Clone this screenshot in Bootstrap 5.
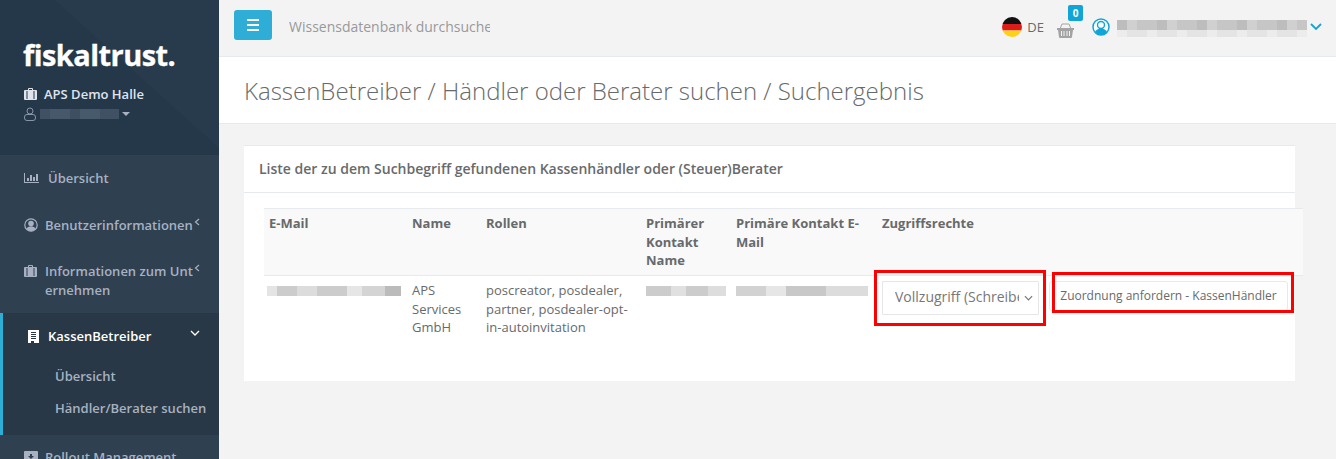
<!DOCTYPE html>
<html lang="de">
<head>
<meta charset="utf-8">
<title>Suchergebnis</title>
<link href="https://cdn.jsdelivr.net/npm/bootstrap@5.3.0/dist/css/bootstrap.min.css" rel="stylesheet">
<style>
html,body{height:459px;overflow:hidden}
body{font-family:"Open Sans",sans-serif;font-size:13px;color:#676a6c;background:#f3f3f4}
.shell{height:459px}
.side{width:219px;flex:none;background:#2f4050;overflow:hidden}
.side-head{height:155px;background:linear-gradient(42deg,#25384a 0 58%,#283b4c 58.2% 100%);padding:38px 0 0 23px;color:#dfe4ed}
.logo{font-family:"Open Sans",sans-serif;font-weight:700;font-size:29px;line-height:33px;color:#fff;letter-spacing:-.55px;-webkit-text-stroke:.3px #fff}
.org{font-weight:600;line-height:18px;margin:14px 0 0 1px;color:#dfe4ed;gap:7px}
.usr{height:18px;gap:4px;margin:2px 0 0 1px}
.caret-d{width:0;height:0;border:4px solid transparent;border-top-color:#a7b1c2;border-bottom:0;margin-left:-1px}
.blur-u{width:79px;height:10px;background:linear-gradient(90deg,#3f5163 0 10px,#47586a 10px 30px,#3d4f60 30px 40px,#475a6c 40px 60px,#3f5163 60px)}
.mnav a{display:flex;color:#a7b1c2;font-weight:600;text-decoration:none;position:relative}
.mnav svg{flex:none}
.it1{height:47px;padding:14px 24px;line-height:18px;gap:9px}
.it2{height:46px;padding:14px 0 0 24px;line-height:18px;gap:5px}
.it3{height:65px;padding:14px 0 0 24px;line-height:19px;gap:5px}
.it-t{width:148px;word-break:break-all}
.chev{position:absolute;left:194px;top:16px}
.active-wrap{background:#293846;border-left:3px solid #2eaed6;height:122px}
.active-wrap .it4{color:#fff;padding:14px 0 0 25px;height:47px;line-height:18px;gap:9px}
.subnav a{padding:0 0 0 52px;height:32px;line-height:32px;font-weight:600}
.it5{padding:13px 0 0 24px;gap:7px;line-height:18px}
.main{flex:1;min-width:0;background:#f3f3f4}
.topb{height:57px;border-bottom:1px solid #e7eaec;padding:0 0 0 15px}
.menu-b{width:38px;height:30px;background:#2eaed6;border-radius:3px;padding:0;border:0;margin-top:10px;display:flex;flex-direction:column;gap:3px;align-items:center;justify-content:center}
.menu-b span{display:block;width:12px;height:2px;background:#fff}
.srch{margin:0 0 0 17px;width:201px;height:56px;border:0;background:transparent;font-size:14px;color:#999;overflow:hidden;white-space:nowrap;line-height:54px}
.tr-r{margin-left:auto;height:56px;padding:0 14px 2px 0}
.lang{font-size:13px;margin:0 0 0 5px;line-height:15px;color:#676a6c}
.basket-w{position:relative;margin:0 0 0 13px;width:17px;height:15px}
.cnt{position:absolute;left:11px;top:-15px;width:15px;height:16px;background:#10a5d6;color:#fff;font-size:10px;font-weight:700;line-height:16px;text-align:center;border-radius:2px}
.ava{margin-left:18px}
.blur-top{margin-left:7px;width:190px;padding-top:2px}
.blur-top i{display:block;height:10px;background:repeating-linear-gradient(90deg,#bdbdbd 0 10px,#d0d0d0 10px 20px,#c6c6c6 20px 40px)}
.blur-top i+i{height:7px;background:repeating-linear-gradient(90deg,#ececec 0 10px,#e4e4e4 10px 30px)}
.t-chev{margin-left:3px}
.pagehead{height:67px;background:#fff;border-bottom:1px solid #e7eaec;padding:0 0 0 25px}
.pagehead h2{font-family:"Open Sans",sans-serif;font-size:24px;font-weight:300;line-height:67px;margin:0;color:#676a6c}
.wrapc{padding:21px 41px 0 25px}
.box{background:#fff;border:0;border-top:1px solid #e7eaec;border-radius:0;height:236px}
.box-t{height:47px;border-bottom:1px solid #e7eaec;padding:14px 15px 0;font-size:14px;line-height:17px;font-weight:600;color:#676a6c;margin:0}
.tblw{padding:15px 0 0 20px;width:1059px}
.ttbl{table-layout:fixed;width:1039px;margin:0;font-size:13px;color:#676a6c;--bs-table-color:#676a6c;--bs-table-bg:transparent}
.ttbl th{background:#f9f9f9;font-weight:700;border-top:1px solid #e7eaec;border-bottom:1px solid #e7eaec;padding:5px 5px;line-height:18.5px;height:67px;vertical-align:top}
.ttbl td{border:0;padding:5px;line-height:18.5px;vertical-align:top}
.blurc{display:block;height:10px;margin-top:5px}
.b1{width:134px;margin-left:-2px;background:linear-gradient(90deg,#e4e4e4 0 10px,#ccc 10px 30px,#dcdcdc 30px 50px,#ccc 50px 80px,#e6e6e6 80px 95px,#d4d4d4 95px 118px,#bbb 118px)}
.b2{width:80px;background:linear-gradient(90deg,#ccc 0 25px,#e0e0e0 25px 40px,#ccc 40px 62px,#ddd 62px)}
.b3{width:132px;background:linear-gradient(90deg,#d2d2d2 0 30px,#e6e6e6 30px 50px,#c8c8c8 50px 90px,#dcdcdc 90px)}
.sel-i{width:157px;height:34px;padding:0 19px 2px 12px;font-size:14px;color:#777;background-image:url("data:image/svg+xml,%3csvg xmlns='http://www.w3.org/2000/svg' viewBox='0 0 10 6'%3e%3cpath fill='none' stroke='%23777' stroke-width='1.300' d='M1 1l4 4 4-4'/%3e%3c/svg%3e");background-position:right 5px center;background-size:9px 6px;border:1px solid #e5e6e7;border-radius:1px;line-height:30px}
.red{position:absolute;border:3px solid red;pointer-events:none}
.r1{left:874px;top:270px;width:172px;height:56px}
.r2{left:1052px;top:272px;width:242px;height:41px}
.req{font-size:12px;color:#676a6c;background:#fff;border:1px solid #e7eaec;border-radius:3px;height:30px;width:239px;padding:0;white-space:nowrap;margin:0 0 0 -5px;line-height:28px}
</style>
</head>
<body>
<div class="shell d-flex">
<nav class="side">
  <div class="side-head">
    <div class="logo">fiskaltrust.</div>
    <div class="org d-flex align-items-center">
      <svg width="13" height="12" viewBox="0 0 13 12"><path fill="#dfe4ed" d="M4 2V1q0-1 1-1h3q1 0 1 1v1h3q1 0 1 1v8q0 1-1 1H1q-1 0-1-1V3q0-1 1-1zM5 1v1h3V1zM2.500 3v8h1V3zM9.500 3v8h1V3z" fill-rule="evenodd"/></svg>
      <span>APS Demo Halle</span>
    </div>
    <div class="usr d-flex align-items-center">
      <svg width="12" height="14" viewBox="0 0 12 14" fill="none" stroke="#8796a8"><circle cx="6" cy="4" r="3"/><rect x=".5" y="7.500" width="11" height="6" rx="2.500"/></svg>
      <span class="blur-u"></span><span class="caret-d"></span>
    </div>
  </div>
  <div class="mnav">
    <a class="it1" href="#">
      <svg width="15" height="18" viewBox="0 0 15 18"><path fill="#a7b1c2" d="M0 4h1v9h14v1H0zM3 9h2v3H3zM6 6h2v6H6zM9 8h2v4H9zM12 5h2v7h-2z"/></svg>
      <span>Übersicht</span>
    </a>
    <a class="it2" href="#">
      <svg width="16" height="18" viewBox="0 0 16 18"><circle cx="7" cy="9" r="6.200" fill="none" stroke="#a7b1c2" stroke-width="1.200"/><circle cx="7" cy="7.500" r="2.800" fill="#a7b1c2"/><path fill="#a7b1c2" d="M2.500 13q1-2.800 4.500-2.800t4.500 2.800q-2 2.300-4.500 2.300t-4.500-2.300z"/></svg>
      <span class="it-t">Benutzerinformationen</span>
      <svg class="chev" width="6" height="8" viewBox="0 0 6 8" fill="none" stroke="#a7b1c2" stroke-width="1.200"><path d="M5 1 1.500 4 5 7"/></svg>
    </a>
    <a class="it3" href="#">
      <svg width="16" height="18" viewBox="0 0 16 18"><path fill="#a7b1c2" fill-rule="evenodd" d="M4 5V4q0-1 1-1h3q1 0 1 1v1h3q1 0 1 1v8q0 1-1 1H1q-1 0-1-1V6q0-1 1-1zM5 4v1h3V4zM2.500 6v8h1V6zM9.500 6v8h1V6z"/></svg>
      <span class="it-t">Informationen zum Unternehmen</span>
      <svg class="chev" width="6" height="8" viewBox="0 0 6 8" fill="none" stroke="#a7b1c2" stroke-width="1.200"><path d="M5 1 1.500 4 5 7"/></svg>
    </a>
    <div class="active-wrap">
      <a class="it4" href="#">
        <svg width="11" height="18" viewBox="0 0 11 18"><path fill="#fff" fill-rule="evenodd" d="M0 3h11v13H0zM3 5v1h5V5zM3 7v1h5V7zM3 9v1h5V9zM3 11v1h5v-1zM3 14v2h3v-2z"/></svg>
        <span>KassenBetreiber</span>
        <svg class="chev" style="left:187px;top:17px" width="10" height="7" viewBox="0 0 10 7" fill="none" stroke="#fff" stroke-width="1.300"><path d="M1 1l4 4 4-4"/></svg>
      </a>
      <div class="subnav">
        <a href="#">Übersicht</a>
        <a href="#">Händler/Berater suchen</a>
      </div>
    </div>
    <a class="it5" href="#">
      <svg width="14" height="18" viewBox="0 0 14 18"><path fill="#a7b1c2" d="M1 3h12q1 0 1 1v11q0 1-1 1H1q-1 0-1-1V4q0-1 1-1zM6 6v2H4l3 3 3-3H8V6z" fill-rule="evenodd"/></svg>
      <span>Rollout Management</span>
    </a>
  </div>
</nav>
<main class="main">
  <div class="topb d-flex">
    <button class="menu-b" type="button" aria-label="Menü"><span></span><span></span><span></span></button>
    <div class="srch">Wissensdatenbank durchsuchen</div>
    <div class="tr-r d-flex align-items-center">
      <svg width="20" height="20" viewBox="0 0 20 20"><defs><clipPath id="fl"><circle cx="10" cy="10" r="10"/></clipPath></defs><g clip-path="url(#fl)"><rect width="20" height="7" fill="#111"/><rect y="7" width="20" height="6.500" fill="#dd1c1c"/><rect y="13.500" width="20" height="6.500" fill="#fcd116"/></g></svg>
      <span class="lang">DE</span>
      <div class="basket-w">
        <svg width="17" height="15" viewBox="0 0 17 15"><path fill="#a3a3a3" fill-rule="evenodd" d="M0 5h17v2h-1l-1 7q0 1-1 1H3q-1 0-1-1L1 7H0zM4 8v5h1V8zM6.500 8v5h1V8zM9.500 8v5h1V8zM12 8v5h1V8z"/><path fill="none" stroke="#a3a3a3" d="M3 6 5 1h7l2 5"/></svg>
        <span class="cnt">0</span>
      </div>
      <svg class="ava" width="18" height="18" viewBox="0 0 18 18"><circle cx="9" cy="9" r="8" fill="#fff" stroke="#10a5d6" stroke-width="1.500"/><circle cx="9" cy="7" r="3.500" fill="none" stroke="#10a5d6" stroke-width="1.400"/><path fill="#10a5d6" d="M3 14q1.500-3.500 6-3.500t6 3.500q-2.500 3-6 3t-6-3z"/></svg>
      <div class="blur-top"><i></i><i></i></div>
      <svg class="t-chev" width="12" height="8" viewBox="0 0 12 8" fill="none" stroke="#10a5d6" stroke-width="1.800"><path d="M1 1l5 5 5-5"/></svg>
    </div>
  </div>
  <div class="pagehead"><h2>KassenBetreiber / Händler oder Berater suchen / Suchergebnis</h2></div>
  <div class="wrapc">
    <div class="box">
      <h5 class="box-t">Liste der zu dem Suchbegriff gefundenen Kassenhändler oder (Steuer)Berater</h5>
      <div class="tblw">
        <table class="table ttbl">
          <colgroup><col style="width:143px"><col style="width:74px"><col style="width:160px"><col style="width:90px"><col style="width:146px"><col style="width:172px"><col style="width:254px"></colgroup>
          <thead><tr><th>E-Mail</th><th>Name</th><th>Rollen</th><th>Primärer Kontakt Name</th><th>Primäre Kontakt E-Mail</th><th>Zugriffsrechte</th><th></th></tr></thead>
          <tbody><tr>
            <td><span class="blurc b1"></span></td>
            <td>APS Services GmbH</td>
            <td>poscreator, posdealer, partner, posdealer-opt-in-autoinvitation</td>
            <td><span class="blurc b2"></span></td>
            <td><span class="blurc b3"></span></td>
            <td><select class="form-select sel-i" aria-label="Zugriffsrechte"><option>Vollzugriff (Schreiben)</option></select></td>
            <td><button class="btn req" type="button">Zuordnung anfordern - KassenHändler</button></td>
          </tr></tbody>
        </table>
      </div>
    </div>
  </div>
</main>
</div>
<div class="red r1"></div>
<div class="red r2"></div>
<script src="https://cdn.jsdelivr.net/npm/bootstrap@5.3.0/dist/js/bootstrap.bundle.min.js"></script>
</body>
</html>
